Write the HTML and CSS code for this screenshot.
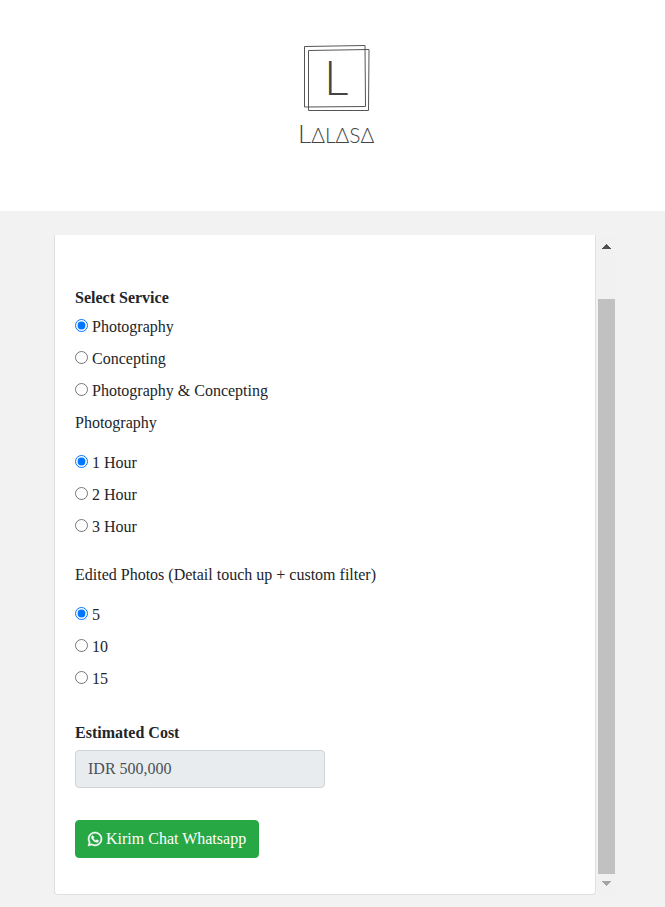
FILE: index.html
```html
<!DOCTYPE html>
<html lang="id">
<head>
  <meta charset="utf-8">
  <meta name="viewport" content="width=device-width, initial-scale=1">
  <title>Lalasa</title>
  <link rel="stylesheet" href="styles.css">
</head>
<body>
  <header class="header">
    <svg class="logo" width="80" height="104" viewBox="0 0 80 104" role="img" aria-label="Lalasa">
      <path class="frame" d="M6.500 3.500L67 2.500L67.500 63.500L6.500 64Z"/>
      <path class="frame" d="M10.500 7.500L71 6.500L70.500 67.500L10.500 67.500Z"/>
      <text class="monogram" x="26" y="52">L</text>
      <text class="wordmark" x="0" y="100"><tspan class="initial">L</tspan>ΔLΔSΔ</text>
    </svg>
  </header>
  <main class="main">
    <div class="scroller">
      <form class="card">
        <fieldset class="group service">
          <legend class="heading">Select Service</legend>
          <label><input type="radio" name="service" checked> Photography</label>
          <label><input type="radio" name="service"> Concepting</label>
          <label><input type="radio" name="service"> Photography &amp; Concepting</label>
        </fieldset>
        <fieldset class="group hours">
          <legend class="caption">Photography</legend>
          <label><input type="radio" name="hours" checked> 1 Hour</label>
          <label><input type="radio" name="hours"> 2 Hour</label>
          <label><input type="radio" name="hours"> 3 Hour</label>
        </fieldset>
        <fieldset class="group photos">
          <legend class="caption">Edited Photos (Detail touch up + custom filter)</legend>
          <label><input type="radio" name="photos" checked> 5</label>
          <label><input type="radio" name="photos"> 10</label>
          <label><input type="radio" name="photos"> 15</label>
        </fieldset>
        <label class="heading" for="cost">Estimated Cost</label>
        <input class="cost" id="cost" type="text" value="IDR 500,000" readonly>
        <button class="button" type="button">
          <svg class="whatsapp" width="14" height="14" viewBox="0 0 448 448" aria-hidden="true"><path d="M380.900 65.100C339 23.100 283.200 0 223.900 0 101.500 0 1.900 99.600 1.900 222c0 39.100 10.200 77.300 29.600 111L0 448l117.700-30.900c32.400 17.700 68.900 27 106.100 27h.1c122.300 0 224.100-99.600 224.100-222 0-59.300-25.200-115-67.100-157zM223.900 406.700c-33.200 0-65.700-8.900-94-25.700l-6.700-4-69.800 18.300L72 327.200l-4.400-7c-18.500-29.400-28.200-63.300-28.200-98.200 0-101.700 82.800-184.500 184.600-184.500 49.300 0 95.600 19.200 130.400 54.100 34.800 34.900 56.200 81.200 56.100 130.500 0 101.800-84.900 184.600-186.600 184.600zm101.200-138.200c-5.500-2.800-32.800-16.200-37.900-18-5.100-1.900-8.800-2.800-12.500 2.800-3.700 5.600-14.300 18-17.600 21.800-3.200 3.700-6.500 4.200-12 1.400-32.600-16.300-54-29.100-75.500-66-5.700-9.800 5.700-9.100 16.300-30.300 1.800-3.700.9-6.900-.5-9.700-1.400-2.800-12.500-30.100-17.100-41.200-4.500-10.800-9.100-9.300-12.500-9.500-3.200-.2-6.900-.2-10.600-.2-3.700 0-9.700 1.400-14.800 6.900-5.100 5.600-19.400 19-19.400 46.300 0 27.300 19.900 53.700 22.600 57.400 2.800 3.700 39.100 59.700 94.800 83.800 35.200 15.200 49 16.500 66.600 13.900 10.700-1.600 32.800-13.400 37.400-26.400 4.600-13 4.600-24.100 3.200-26.400-1.300-2.500-5-3.900-10.500-6.600z"/></svg>
          Kirim Chat Whatsapp
        </button>
      </form>
      <div class="scrollbar" aria-hidden="true">
        <svg width="17" height="24" viewBox="0 0 17 24" shape-rendering="crispEdges"><path class="arrow-up" d="M4 14h9l-4.500-5z"/></svg>
        <div class="thumb"></div>
        <svg width="17" height="21" viewBox="0 0 17 21" shape-rendering="crispEdges"><path class="arrow-down" d="M4 7h9l-4.500 5z"/></svg>
      </div>
    </div>
  </main>
</body>
</html>
```
FILE: styles.css
```css
*,
*::before,
*::after {
  box-sizing: border-box;
}

body {
  margin: 0;
  min-height: 100vh;
  display: flex;
  flex-direction: column;
  background: #f2f2f2;
  color: #212529;
  font: 16px/24px "Liberation Serif", "Times New Roman", serif;
}

.header {
  display: flex;
  justify-content: center;
  padding: 43px 0 64px 10px;
  background: #fff;
}

.logo {
  display: block;
  overflow: visible;
}

.frame {
  fill: none;
  stroke: #555;
  stroke-width: 1;
}

.monogram,
.wordmark {
  font-family: Lato, sans-serif;
  font-weight: 300;
  fill: #444;
}

.monogram {
  font-size: 48px;
}

.wordmark {
  font-size: 21px;
}

.initial {
  font-size: 26px;
}

.main {
  padding: 24px 50px 12px 54px;
}

.scroller {
  display: flex;
  gap: 2px;
}

.card {
  flex: 1;
  display: flex;
  flex-direction: column;
  align-items: flex-start;
  padding: 51px 20px 36px;
  background: #fff;
  border: 1px solid #dfdfdf;
  border-top: 0;
  border-radius: 0 0 4px 4px;
}

.group {
  display: flex;
  flex-direction: column;
  gap: 8px;
  margin: 0;
  padding: 0;
  border: 0;
}

.service {
  margin-bottom: 8px;
}

.hours {
  margin-bottom: 24px;
}

.photos {
  margin-bottom: 30px;
}

.heading {
  margin-bottom: 5px;
  padding: 0;
  font-weight: 700;
}

.caption {
  margin-bottom: 16px;
  padding: 0;
}

input[type="radio"] {
  width: 13px;
  height: 13px;
  margin: 0;
}

.cost {
  width: 250px;
  max-width: 100%;
  height: 38px;
  margin: 0 0 32px;
  padding: 6px 12px;
  border: 1px solid #ced4da;
  border-radius: 4px;
  background: #e9ecef;
  color: #495057;
  font: inherit;
}

.button {
  display: flex;
  align-items: center;
  gap: 4px;
  height: 38px;
  padding: 6px 12px;
  border: 1px solid #28a745;
  border-radius: 4px;
  background: #28a745;
  color: #fff;
  font: inherit;
}

.whatsapp {
  overflow: visible;
  fill: currentColor;
  stroke: currentColor;
  stroke-width: 16;
}

.scrollbar {
  display: flex;
  flex-direction: column;
  width: 17px;
  background: #f1f1f1;
}

.scrollbar svg {
  display: block;
  flex: none;
}

.scrollbar svg:first-child {
  margin-bottom: 40px;
}

.thumb {
  flex: 1;
  background: #c1c1c1;
}

.arrow-up {
  fill: #505050;
}

.arrow-down {
  fill: #a3a3a3;
}
```
